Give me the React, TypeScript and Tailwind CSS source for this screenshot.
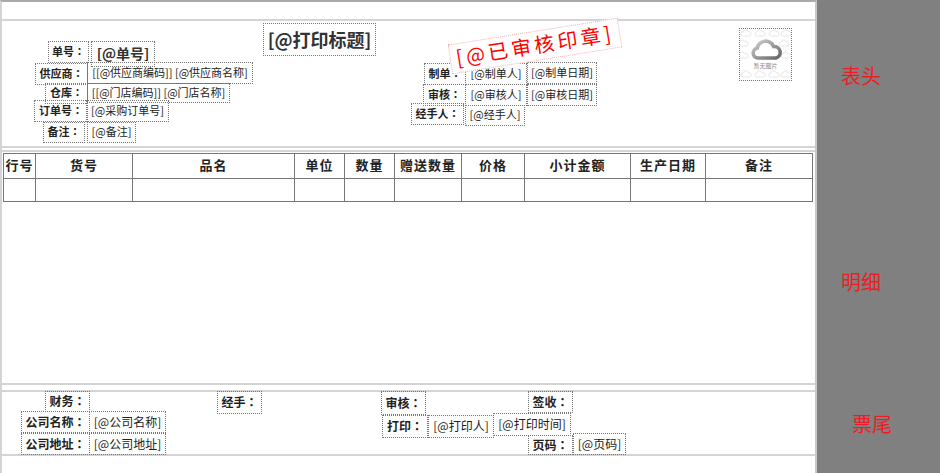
type FieldProps = {
  x: number
  y: number
  w: number
  h: number
  text: string
  /** Label cells are bold and dark, value cells are regular weight. */
  label?: boolean
  size?: 'sm' | 'md'
}

const FONT = 'font-["Noto_Sans_CJK_SC","Noto_Sans",sans-serif]'

// Designer canvas: coordinates below are relative to the band they sit on
const headerFields: FieldProps[] = [
  { x: 46, y: 20, w: 41, h: 22, text: '单号：', label: true },
  { x: 33, y: 42, w: 53, h: 22, text: '供应商：', label: true },
  { x: 43, y: 62, w: 43, h: 21, text: '仓库：', label: true },
  { x: 32, y: 79, w: 54, h: 22, text: '订单号：', label: true },
  { x: 41, y: 101, w: 42, h: 21, text: '备注：', label: true },
  { x: 85, y: 41, w: 166, h: 22, text: '[[@供应商编码]] [@供应商名称]' },
  { x: 85, y: 62, w: 143, h: 20, text: '[[@门店编码]] [@门店名称]' },
  { x: 84, y: 79, w: 83, h: 22, text: '[@采购订单号]' },
  { x: 85, y: 101, w: 49, h: 21, text: '[@备注]' },
  { x: 422, y: 42, w: 42, h: 22, text: '制单：', label: true },
  { x: 421, y: 63, w: 43, h: 22, text: '审核：', label: true },
  { x: 409, y: 82, w: 53, h: 22, text: '经手人：', label: true },
  { x: 463, y: 42, w: 62, h: 22, text: '[@制单人]' },
  { x: 463, y: 63, w: 62, h: 22, text: '[@审核人]' },
  { x: 463, y: 84, w: 60, h: 21, text: '[@经手人]' },
  { x: 525, y: 41, w: 70, h: 22, text: '[@制单日期]' },
  { x: 525, y: 63, w: 70, h: 22, text: '[@审核日期]' },
]

const footerFields: FieldProps[] = [
  { x: 43, y: -1, w: 45, h: 21, text: '财务：', label: true, size: 'md' },
  { x: 215, y: -1, w: 45, h: 23, text: '经手：', label: true, size: 'md' },
  { x: 379, y: -1, w: 45, h: 24, text: '审核：', label: true, size: 'md' },
  { x: 526, y: -1, w: 45, h: 22, text: '签收：', label: true, size: 'md' },
  { x: 19, y: 19, w: 69, h: 22, text: '公司名称：', label: true, size: 'md' },
  { x: 19, y: 41, w: 69, h: 22, text: '公司地址：', label: true, size: 'md' },
  { x: 87, y: 19, w: 77, h: 22, text: '[@公司名称]', size: 'md' },
  { x: 87, y: 41, w: 77, h: 22, text: '[@公司地址]', size: 'md' },
  { x: 380, y: 23, w: 46, h: 23, text: '打印：', label: true, size: 'md' },
  { x: 426, y: 23, w: 66, h: 23, text: '[@打印人]', size: 'md' },
  { x: 491, y: 21, w: 78, h: 23, text: '[@打印时间]', size: 'md' },
  { x: 526, y: 43, w: 45, h: 20, text: '页码：', label: true, size: 'md' },
  { x: 571, y: 41, w: 53, h: 22, text: '[@页码]', size: 'md' },
]

const columns = [
  { name: '行号', width: 'w-[32px]' },
  { name: '货号', width: 'w-[97px]' },
  { name: '品名', width: 'w-[162px]' },
  { name: '单位', width: 'w-[50px]' },
  { name: '数量', width: 'w-[50px]' },
  { name: '赠送数量', width: 'w-[67px]' },
  { name: '价格', width: 'w-[63px]' },
  { name: '小计金额', width: 'w-[106px]' },
  { name: '生产日期', width: 'w-[75px]' },
  { name: '备注', width: 'w-[107px]' },
]

function Field({ x, y, w, h, text, label, size = 'sm' }: FieldProps) {
  const sizeClass = size === 'md' ? 'text-[12px] pb-px' : 'text-[11px] pb-[2px]'
  const weightClass = label ? 'font-bold text-[#222]' : 'font-normal text-[#222]'
  return (
    <div
      className={`absolute flex items-center justify-center whitespace-pre border border-dotted border-[#777] leading-none ${sizeClass} ${weightClass}`}
      style={{ left: x, top: y, width: w, height: h }}
    >
      {label ? (
        <>
          {text.slice(0, -1)}
          {/* TC face centres the full-width colon, like the original font */}
          <span className='font-["Noto_Sans_CJK_TC",sans-serif]'>：</span>
        </>
      ) : (
        text
      )}
    </div>
  )
}

function NoImage() {
  const clouds = [
    [6, 5], [20, 5], [34, 5], [46, 5],
    [3, 15], [44, 15],
    [3, 27], [46, 27],
    [6, 46], [20, 46], [34, 46], [46, 46],
  ]
  return (
    <div className="absolute left-[737px] top-[7px] h-[53px] w-[53px] border border-dotted border-[#777]">
      <svg viewBox="0 0 51 51" className="h-full w-full">
        <defs>
          <linearGradient id="cloud" x1="0" y1="0" x2="1" y2="1">
            <stop offset="0" stopColor="#cfcfcf" />
            <stop offset="1" stopColor="#666" />
          </linearGradient>
        </defs>
        {clouds.map(([cx, cy]) => (
          <path
            key={`${cx}-${cy}`}
            d={`M${cx - 3} ${cy + 2}a2 2 0 0 1 0-4a2.6 2.6 0 0 1 5-.4a2.2 2.2 0 0 1 1.5 4.4z`}
            fill="none"
            stroke="#e6e6e6"
            strokeWidth="1"
          />
        ))}
        <path
          d="M18 29a5 5 0 0 1-.8-9.9a8.6 8.6 0 0 1 16.4-1.6a5.9 5.9 0 0 1 2.4 11.5z"
          fill="none"
          stroke="url(#cloud)"
          strokeWidth="3.6"
        />
      </svg>
      <span className="absolute inset-x-0 top-[34px] text-center text-[6px] leading-none text-[#888]">
        暂无图片
      </span>
    </div>
  )
}

function Stamp() {
  return (
    <div className="absolute left-[447px] top-[10px] flex h-[30px] w-[172px] -rotate-[9deg] items-center justify-center whitespace-nowrap border border-dotted border-[#f7b0b4] bg-white pb-[2px] text-[20px] leading-none tracking-[3.4px] text-[#f00]">
      [@已审核印章]
    </div>
  )
}

export default function App() {
  return (
    <div className={`flex h-[473px] w-[940px] overflow-hidden bg-[#808080] ${FONT}`}>
      <div className="flex h-full w-[817px] flex-col border-t-2 border-r-2 border-l-2 border-t-[#a9a9a9] border-r-[#c8c8c8] border-l-[#d4d4d4] bg-white">
        <div className="h-[17px]" />

        {/* 表头 band */}
        <div className="relative h-[129px] border-y-2 border-[#d4d4d4]">
          {headerFields.map((f) => (
            <Field key={f.text} {...f} />
          ))}
          <div className="absolute left-[89px] top-[20px] flex h-[26px] w-[64px] items-center justify-center whitespace-nowrap border border-dotted border-[#777] pb-[2px] text-[14px] font-bold leading-none text-[#333]">
            [@单号]
          </div>
          <div className="absolute left-[261px] top-[2px] flex h-[33px] w-[113px] items-center justify-center whitespace-nowrap border border-dotted border-[#777] pb-[2px] text-[18px] font-bold leading-none text-[#333]">
            [@打印标题]
          </div>
          <Stamp />
          <NoImage />
        </div>

        <div className="h-[2px]" />

        {/* 明细 band */}
        <div className="h-[235px] border-y-2 border-[#d4d4d4] pt-px pl-px">
          <table className="w-[809px] table-fixed border-collapse">
            <thead>
              <tr className="h-[25px]">
                {columns.map((c) => (
                  <th
                    key={c.name}
                    className={`${c.width} whitespace-nowrap border border-[#777] p-0 pb-[3px] text-center text-[13px] font-bold leading-none tracking-[1px] text-[#222]`}
                  >
                    {c.name}
                  </th>
                ))}
              </tr>
            </thead>
            <tbody>
              <tr className="h-[23px]">
                {columns.map((c) => (
                  <td key={c.name} className="border border-[#777] p-0" />
                ))}
              </tr>
            </tbody>
          </table>
        </div>

        <div className="h-[5px]" />

        {/* 票尾 band */}
        <div className="relative h-[66px] border-y-2 border-[#d4d4d4]">
          {footerFields.map((f) => (
            <Field key={f.text} {...f} />
          ))}
        </div>
      </div>

      <div className="flex flex-1 flex-col text-[20px] leading-none text-[#ee1c25]">
        <span className="mt-[66px] ml-[24px]">表头</span>
        <span className="mt-[186px] ml-[24px]">明细</span>
        <span className="mt-[122px] ml-[35px]">票尾</span>
      </div>
    </div>
  )
}
